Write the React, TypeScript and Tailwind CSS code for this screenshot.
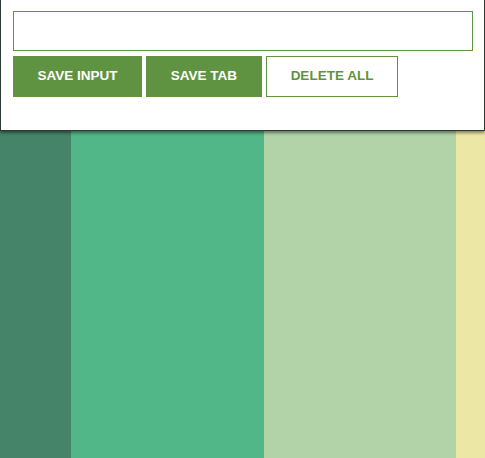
import React from 'react'

const stripes = ['w-[71px] bg-[#468469]', 'w-[193px] bg-[#52b788]', 'w-[192px] bg-[#b2d3a8]', 'flex-1 bg-[#ede7a6]']

export default function App() {
  return (
    <div className="relative h-[458px] w-[485px] overflow-hidden font-['Liberation_Sans',Arial,sans-serif]">
      <div className="flex h-full">
        {stripes.map((cls, i) => (
          <div key={i} className={cls} />
        ))}
      </div>

      {/* popup panel */}
      <div className="absolute left-0 top-0 h-[131px] w-[485px] border-x border-b border-[#2b3a32] bg-white shadow-[0_2px_3px_rgba(0,0,0,0.45)]">
        <div className="px-3 pt-[11px]">
          <input
            type="text"
            className="block h-10 w-[460px] border border-[#5f9341] bg-white outline-none"
          />
          <div className="mt-[5px] flex gap-1">
            <button className="h-[41px] w-[129px] bg-[#5f9341] text-[13.5px] font-bold text-white">
              SAVE INPUT
            </button>
            <button className="h-[41px] w-[116px] bg-[#5f9341] text-[13.5px] font-bold text-white">
              SAVE TAB
            </button>
            <button className="h-[41px] w-[132px] border border-[#5f9341] bg-white text-[13.5px] font-bold text-[#5f9341]">
              DELETE ALL
            </button>
          </div>
        </div>
      </div>
    </div>
  )
}
